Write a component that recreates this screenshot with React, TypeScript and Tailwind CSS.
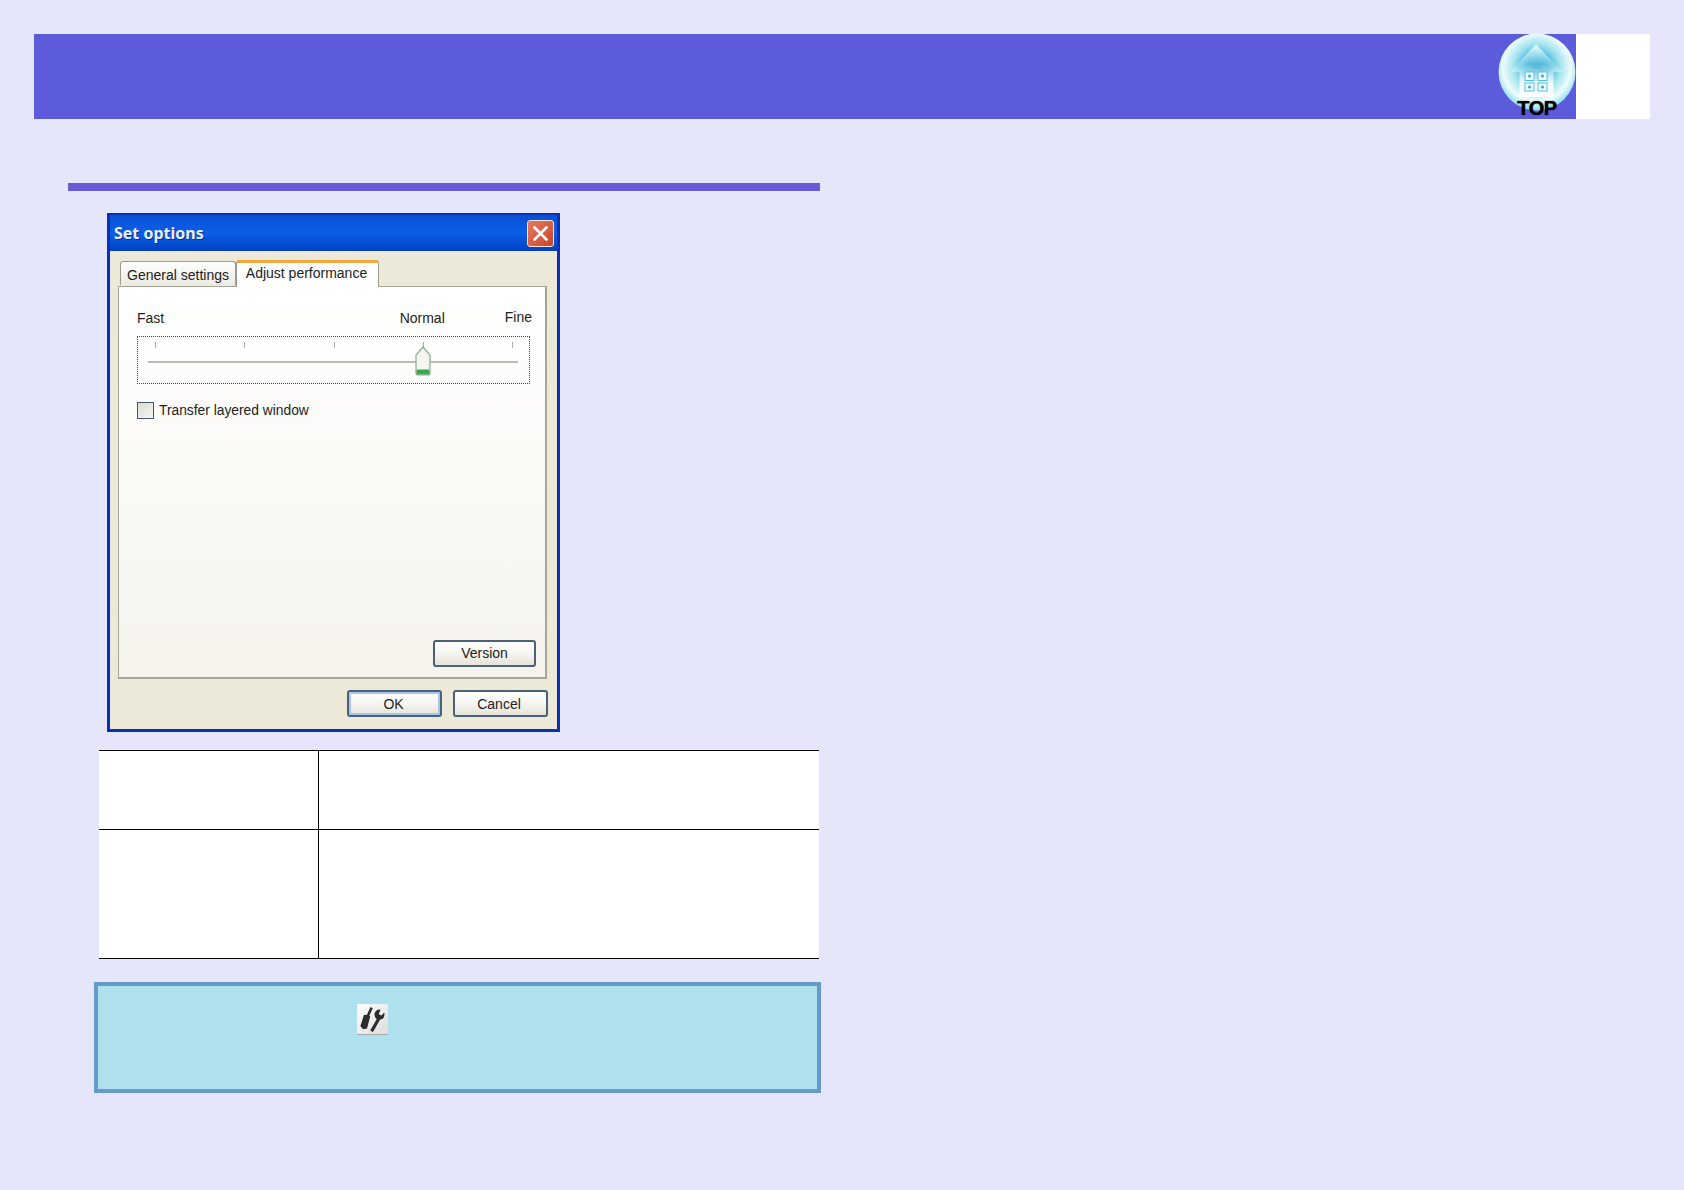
import React from 'react';

const tahoma = "font-['Noto_Sans','Open_Sans',sans-serif]";
const uiText = "font-['Liberation_Sans',sans-serif] text-[14px] text-[#222]";

function TopLogo() {
  return (
    <div className="absolute right-[-1px] top-[-2px] w-[80px] h-[87px]">
      <svg width="80" height="80" viewBox="0 0 80 80">
        <defs>
          <radialGradient id="ball" cx="50%" cy="44%" r="54%">
            <stop offset="0%" stopColor="#0f98ca" />
            <stop offset="28%" stopColor="#3fb4d8" />
            <stop offset="58%" stopColor="#a8e6f0" />
            <stop offset="82%" stopColor="#effcfd" />
            <stop offset="100%" stopColor="#96e2ec" />
          </radialGradient>
          <linearGradient id="house" x1="0" y1="0" x2="0" y2="1">
            <stop offset="0%" stopColor="#e4f9fb" stopOpacity="0.95" />
            <stop offset="38%" stopColor="#c4eef6" stopOpacity="0.3" />
            <stop offset="70%" stopColor="#f0fcfd" stopOpacity="0.9" />
            <stop offset="100%" stopColor="#ffffff" stopOpacity="1" />
          </linearGradient>
        </defs>
        <circle cx="40" cy="40" r="38.5" fill="url(#ball)" />
        <path d="M39 12 L65 40 L56.5 40 L56.5 65 L22.5 65 L22.5 40 L13 40 Z" fill="url(#house)" strokeLinejoin="round" />
        <g fill="#eefbfd" stroke="#58bcd8" strokeWidth="1">
          <rect x="28" y="40" width="9" height="8.5" />
          <rect x="41" y="40" width="9" height="8.5" />
          <rect x="28" y="51" width="9" height="8" />
          <rect x="41" y="51" width="9" height="8" />
        </g>
        <g fill="#35aecb">
          <circle cx="32.5" cy="44" r="1.6" />
          <circle cx="45.5" cy="44" r="1.6" />
          <circle cx="32.5" cy="55" r="1.6" />
          <circle cx="45.5" cy="55" r="1.6" />
        </g>
      </svg>
      <span className="absolute left-0 w-[80px] text-center top-[65px] text-[20px] leading-[22px] font-bold text-black tracking-[-0.5px] [text-shadow:0_0_1px_#000] font-['Liberation_Sans',sans-serif]">TOP</span>
    </div>
  );
}

function XpButton({ label, def, className }: { label: string; def?: boolean; className: string }) {
  return (
    <div className={`flex items-center justify-center h-[27px] rounded-[3px] border-2 border-[#4a6178] bg-gradient-to-b from-white via-[#f6f5f0] to-[#e6e3da] ${uiText} ${def ? 'shadow-[inset_0_0_0_2px_#a9c6ea]' : ''} ${className}`}>
      {label}
    </div>
  );
}

function SetOptions() {
  return (
    <div className={`ml-[39px] mt-[22px] w-[453px] h-[519px] flex flex-col bg-[#0a3fc8] border-[3px] border-[#0831b8] ${tahoma}`}>
      {/* title bar */}
      <div className="h-[36px] flex items-center justify-between pl-[4px] pr-[3px] -mt-[1px] bg-gradient-to-b from-[#0a50d4] via-[#0a5fe8] to-[#0340c0]">
        <span className="text-[16px] font-bold text-[#e8f0fb] [text-shadow:1px_1px_0_#0a2f90]">Set options</span>
        <div className="w-[27px] h-[27px] rounded-[3px] border border-[#f2e6e0] bg-gradient-to-br from-[#e8795a] to-[#c8452a] flex items-center justify-center">
          <svg width="17" height="17" viewBox="0 0 17 17">
            <path d="M2.5 2.5 L14.5 14.5 M14.5 2.5 L2.5 14.5" stroke="#fff" strokeWidth="2.6" strokeLinecap="round" />
          </svg>
        </div>
      </div>

      {/* client area */}
      <div className="flex-1 bg-[#ece9d8] pl-[8px] pr-[10px] pt-[8px] flex flex-col">
        <div className="flex items-end h-[27px] pl-[2px] relative z-10">
          <div className={`w-[116px] h-[24px] mb-[1px] border border-b-0 border-[#9a9a8e] rounded-t-[3px] bg-gradient-to-b from-white to-[#ecebe3] flex items-center justify-center pt-[3px] ${uiText}`}>
            General settings
          </div>
          <div className={`w-[143px] h-[27px] -mb-[1px] border border-b-0 border-[#9a9a8e] border-t-[3px] border-t-[#f0a83c] rounded-t-[3px] bg-white flex items-center justify-center pb-[4px] pr-[2px] ${uiText}`}>
            Adjust performance
          </div>
        </div>

        <div className="h-[393px] border border-[#a5a598] border-r-2 border-b-2 bg-gradient-to-b from-white to-[#f5f3ec] px-[18px] flex flex-col">
          <div className={`flex items-end h-[48px] leading-[20px] pb-[7px] -mr-[5px] ${uiText}`}>
            <span>Fast</span>
            <span className="ml-auto mr-[60px]">Normal</span>
            <span className="relative -top-[1px]">Fine</span>
          </div>

          <div className="w-[393px] h-[48px] mt-[1px] border border-dotted border-[#444] relative pl-[17px] pr-[16px] pt-[5px]">
            <div className="flex justify-between">
              <div className="w-px h-[6px] bg-[#aaa]" />
              <div className="w-px h-[6px] bg-[#aaa]" />
              <div className="w-px h-[6px] bg-[#aaa]" />
              <div className="w-px h-[6px] bg-[#aaa]" />
              <div className="w-px h-[6px] bg-[#aaa]" />
            </div>
            <div className="h-[2px] -ml-[7px] -mr-[5px] mt-[13px] bg-[#bcbcb2]" />
            <svg className="absolute left-[277px] top-[9px]" width="16" height="30" viewBox="0 0 16 30">
              <path d="M8 1 L15 9 V27 Q15 29 13 29 H3 Q1 29 1 27 V9 Z" fill="#f4f6ee" stroke="#8fa894" strokeWidth="1.2" />
              <rect x="1.5" y="23.5" width="13" height="5" rx="1.5" fill="#3aa84e" />
            </svg>
          </div>

          <div className="flex items-center gap-[5px] mt-[18px] h-[17px]">
            <div className="w-[17px] h-[17px] border border-[#3f5872] bg-gradient-to-br from-[#dcdcd4] to-[#f6f6f2]" />
            <span className={`${uiText} !text-[13.8px] relative top-[1px]`}>Transfer layered window</span>
          </div>

          <div className="mt-auto mb-[10px] flex justify-end -mr-[9px]">
            <XpButton label="Version" className="w-[103px]" />
          </div>
        </div>

        <div className="flex justify-end gap-[11px] mt-[11px] -mr-[1px]">
          <XpButton label="OK" def className="w-[95px] pr-[2px] pt-[1px]" />
          <XpButton label="Cancel" className="w-[95px] pr-[3px] pt-[1px]" />
        </div>
      </div>
    </div>
  );
}

function ToolsIcon() {
  return (
    <div className="w-[31px] h-[31px] ml-[259px] mt-[18px] bg-gradient-to-br from-white to-[#dcdcdc] border-b border-[#aaa]">
      <svg width="31" height="31" viewBox="0 0 31 31">
        <g fill="#2b2b2b">
          <path d="M13.5 3 L15.8 4.2 L12.4 11.6 L13.2 12.6 L10 24.4 L6 25.2 L3.4 22 L7 10.8 L9.8 11 Z" />
          <path d="M21.2 12.6 L24 14 L16 28 L13.2 26.6 Z" />
          <circle cx="22.5" cy="10.6" r="5" />
        </g>
        <path d="M21.8 10.2 L24 4 L29 6.6 L24.4 11.4 Z" fill="#f0f0f0" />
      </svg>
    </div>
  );
}

export default function App() {
  return (
    <div className="w-[1684px] h-[1190px] bg-[#e6e6fa] pt-[34px]">
      {/* page header */}
      <div className="flex ml-[34px] w-[1616px] h-[85px]">
        <div className="relative flex-1 bg-[#5b5bdb]">
          <TopLogo />
        </div>
        <div className="w-[74px] bg-white" />
      </div>

      <div className="ml-[68px] mt-[64px] w-[752px]">
        <div className="h-[8px] bg-[#6a5ad8]" />
        <SetOptions />

        <div className="ml-[31px] mt-[18px] w-[720px] bg-white border-y border-black">
          <div className="flex h-[79px] border-b border-black">
            <div className="w-[220px] border-r border-black" />
          </div>
          <div className="flex h-[128px]">
            <div className="w-[220px] border-r border-black" />
          </div>
        </div>

        <div className="ml-[26px] mt-[23px] w-[727px] h-[111px] border-[4px] border-[#659bcb] bg-[#aee0ee]">
          <ToolsIcon />
        </div>
      </div>
    </div>
  );
}
